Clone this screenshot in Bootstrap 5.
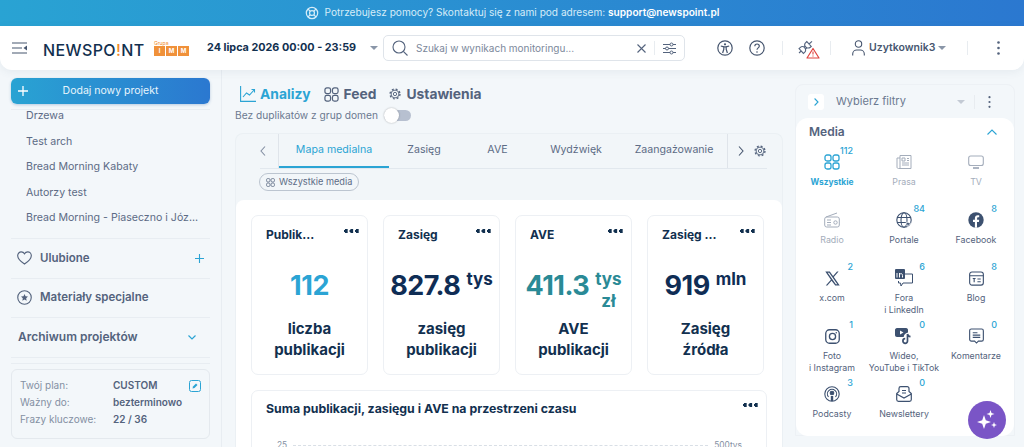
<!DOCTYPE html>
<html lang="pl">
<head>
  <meta charset="UTF-8">
  <meta name="viewport" content="width=device-width, initial-scale=1">
  <title>Newspoint</title>
  <link href="https://cdn.jsdelivr.net/npm/bootstrap@5.3.0/dist/css/bootstrap.min.css" rel="stylesheet">
  <style>
    html, body { height: 447px; overflow: hidden; }
    body { font-family: Inter, "Liberation Sans", sans-serif; background: #f3f7fa; color: #0f2d55; font-size: 11px; position: relative; }
    svg { display: block; flex-shrink: 0; }

    .help-bar { height: 26px; background: linear-gradient(90deg, #29a3d3, #2b78d0); color: #d5ecf8; font-size: 10.1px; gap: 6px; }
    .help-bar b { color: #fff; font-weight: 600; }

    .top-head { height: 44px; background: #fff; border-radius: 0 0 12px 12px; box-shadow: 0 2px 8px rgba(60,90,120,.08); padding-left: 12px; position: relative; z-index: 2; }
    .brand-name { font-size: 16px; font-weight: 500; letter-spacing: .4px; color: #12304f; margin-left: 16px; width: 111px; line-height: 1; padding-top: 3px; white-space: nowrap; }
    .brand-name span { color: #f08a2c; }
    .imm-wrap { width: 36px; color: #f08a2c; font-size: 5px; line-height: 6px; margin-right: 17px; }
    .imm-row { display: flex; gap: 1px; }
    .imm-sq { width: 11px; height: 10px; background: #f0913a; color: #fff; font-size: 6px; line-height: 10px; text-align: center; font-weight: 700; }
    .date-txt { font-size: 10.8px; font-weight: 700; color: #12304f; width: 163px; white-space: nowrap; }
    .caret-dn { width: 0; height: 0; border-left: 4px solid transparent; border-right: 4px solid transparent; border-top: 4px solid #8a96a8; }
    .search-box { width: 302px; height: 26px; border: 1px solid #dfe4ea; border-radius: 5px; margin-left: 5px; padding: 0 8px; color: #7c889b; }
    .search-box .ph { font-size: 10px; margin-left: 8px; flex-grow: 1; }
    .v-sep { width: 1px; height: 14px; background: #e8ecf0; }
    .user-name { font-size: 10.5px; font-weight: 600; color: #47566f; margin-left: 4px; width: 66px; }

    .page-cols { height: 377px; }
    .side-col { width: 222px; flex-shrink: 0; border-right: 1px solid #e8edf2; padding: 8px 11px 0; }
    .add-btn { height: 26px; width: 199px; background: linear-gradient(90deg, #29a3d3, #2b78d0); color: #e8f5fc; border: 0; border-radius: 6px; font-size: 10.5px; padding: 0 7px; box-shadow: 0 1px 3px rgba(40,100,160,.3); }
    .add-btn:hover { background: #2b78d0; color: #fff; }
    .add-btn span { flex-grow: 1; text-align: center; padding-right: 10px; }
    .side-rule { border-top: 1px solid #e8edf2; margin: 0; opacity: 1; }
    .proj-link { padding: 0 0 0 15px; height: 25.6px; line-height: 25.6px; color: #5c6b85; font-size: 10.6px; white-space: nowrap; }
    .side-head { height: 39.5px; padding: 0 6px; color: #54637d; font-size: 11.5px; font-weight: 600; border-bottom: 1px solid #e8edf2; }
    .side-head.arch { font-size: 12px; padding-left: 7px; }
    .plan-box { margin-top: 5px; height: 70px; border: 1px solid #e4e9ee; border-radius: 6px; padding: 7px 8px; position: relative; font-size: 10px; line-height: 17px; color: #8490a3; }
    .plan-box b { color: #54637d; font-weight: 600; }
    .plan-label { width: 93px; }

    .main-col { width: 573px; flex-shrink: 0; padding: 0 12px 0 13px; }
    .view-tabs { height: 36px; padding: 12px 0 0 5px; font-size: 13.8px; font-weight: 700; color: #54637d; }
    .view-tabs .on { color: #2ba4d4; }
    .dup-row { height: 19px; font-size: 10.2px; color: #6b7990; }
    .tgl { width: 27px; height: 11px; background: #b7c0d0; border-radius: 6px; margin-left: 6px; position: relative; }
    .tgl::before { content: ""; position: absolute; left: 0; top: -2px; width: 15px; height: 15px; border-radius: 50%; background: #fff; box-shadow: 0 0 2px rgba(0,0,0,.3); }
    .media-shell { margin-top: 8px; border: 1px solid #ebf0f4; border-bottom: 0; border-radius: 8px 8px 0 0; background: #f2f6f9; height: 400px; }
    .chart-tabs { height: 35px; margin: 0 15px 0 24px; border-bottom: 1px solid #e2e8ee; font-size: 10.6px; color: #5c6b85; }
    .tab-scroll { width: 450px; height: 34px; border-left: 1px solid #dfe4ea; border-right: 1px solid #dfe4ea; margin: 0 10px 0 12px; }
    .tab-item { text-align: center; height: 34px; line-height: 32px; white-space: nowrap; }
    .tab-item.on { color: #2ba4d4; border-bottom: 2px solid #2ba4d4; }
    .chip-wrap { height: 31px; padding: 4px 0 0 23px; }
    .media-chip { height: 18px; border: 1px solid #bcc5d0; border-radius: 9px; padding: 0 6px; font-size: 9.2px; color: #5c6b85; }
    .white-panel { background: #fff; border-radius: 8px; padding: 15px; height: 300px; }
    .stat-tile { width: 117px; height: 160px; border: 1px solid #edf0f4; border-radius: 7px; padding: 10px 8px 0 14px; text-align: center; }
    .stat-top { height: 13px; font-size: 12px; font-weight: 700; color: #12304f; text-align: left; white-space: nowrap; }
    .dots3 { width: 15px; height: 4px; margin-top: 3px; background: radial-gradient(circle 2px at 2px 2px, #12304f 98%, transparent) 0 0 / 5.5px 4px repeat-x; }
    .stat-val { height: 37px; margin-top: 33px; padding-right: 6px; font-size: 27px; font-weight: 700; line-height: 1; color: #0f2d55; letter-spacing: -.5px; }
    .stat-val .unit { font-size: 17px; margin-left: 6px; line-height: 22px; margin-top: -4px; letter-spacing: 0; }
    .stat-lbl { margin-top: 9px; padding-right: 6px; font-size: 15px; font-weight: 700; line-height: 21px; color: #12304f; }
    .sum-tile { margin-top: 15px; border: 1px solid #edf0f4; border-radius: 7px; padding: 9px 8px 0 14px; height: 120px; font-size: 12.3px; font-weight: 700; color: #12304f; }
    .axis-row { margin-top: 21px; font-size: 8.4px; font-weight: 400; color: #8490a3; padding: 0 16px 0 11px; }
    .axis-row i { flex-grow: 1; border-top: 1px dashed #d9dfe6; margin: 0 6px; }

    .filter-col { width: 220px; flex-shrink: 0; margin-top: 14px; border: 1px solid #edf1f5; border-radius: 8px 8px 0 0; height: 352px; position: relative; }
    .filter-top { height: 33px; padding: 0 23px 0 12px; color: #6b7990; font-size: 11px; }
    .filter-top .v-sep { margin: 0 13px 0 9px; }
    .chev-box { width: 16px; height: 16px; background: #fff; border-radius: 3px; margin-right: 12px; }
    .media-card { background: #fff; border-radius: 12px; height: 318px; padding-top: 6px; }
    .media-title { height: 15px; padding: 0 17px 0 13px; font-size: 12px; font-weight: 600; color: #54637d; }
    .media-grid { display: grid; grid-template-columns: repeat(3, 72px); grid-auto-rows: 58px; margin-top: 6px; }
    .m-cell { text-align: center; font-size: 8.8px; line-height: 12px; color: #54637d; }
    .m-num { height: 12px; text-align: right; padding-right: 15px; color: #2ba4d4; font-size: 9px; font-weight: 500; line-height: 12px; }
    .m-ico { height: 22px; margin-top: -6px; margin-bottom: 3px; display: flex; justify-content: center; align-items: center; }
    .m-cell.off { color: #a4adbb; }
    .m-cell.on { color: #2ba4d4; font-weight: 700; font-size: 8.4px; }
    .spark-btn { position: absolute; right: 8px; bottom: -4px; width: 38px; height: 38px; background: #7a55c6; border-radius: 50%; }
  </style>
</head>
<body>

  <svg width="0" height="0" style="position:absolute">
    <symbol id="ic-grid" viewBox="0 0 16 16"><g fill="none" stroke="currentColor" stroke-width="1.3"><rect x="1" y="1" width="6" height="6" rx="2"/><rect x="9" y="1" width="6" height="6" rx="2"/><rect x="1" y="9" width="6" height="6" rx="2"/><rect x="9" y="9" width="6" height="6" rx="2"/></g></symbol>
    <symbol id="ic-gear" viewBox="0 0 16 16"><g fill="none" stroke="currentColor"><circle cx="8" cy="8" r="5.2" stroke-width="1.2"/><circle cx="8" cy="8" r="6.6" stroke-width="1.8" stroke-dasharray="2.6 2.6"/><circle cx="8" cy="8" r="2.2" stroke-width="1.2"/></g></symbol>
  </svg>

  <!-- Help bar -->
  <div class="help-bar d-flex align-items-center justify-content-center">
    <svg width="14" height="14" viewBox="0 0 16 16" fill="none" stroke="#d5ecf8" stroke-width="1.4"><circle cx="8" cy="8" r="6.5"/><circle cx="8" cy="8" r="2.8"/><path d="M3.5 3.5l2.5 2.5M12.5 3.5L10 6M3.5 12.5L6 10M12.5 12.5L10 10"/></svg>
    <span>Potrzebujesz pomocy? Skontaktuj się z nami pod adresem: <b>support@newspoint.pl</b></span>
  </div>

  <!-- Header -->
  <header class="top-head d-flex align-items-center">
    <svg width="15" height="12" viewBox="0 0 15 12" stroke="#47566f" stroke-width="1.2" fill="#47566f"><path d="M0 1h15M0 6h10M0 11h15" fill="none"/><path d="M15 3.5v5L11.5 6z" stroke="none"/></svg>
    <div class="brand-name">NEWSPO<span>!</span>NT</div>
    <div class="imm-wrap">
      Grupa
      <div class="imm-row"><div class="imm-sq">I</div><div class="imm-sq">M</div><div class="imm-sq">M</div></div>
    </div>
    <div class="date-txt">24 lipca 2026 00:00 - 23:59</div>
    <div class="caret-dn"></div>
    <div class="search-box d-flex align-items-center">
      <svg width="16" height="16" viewBox="0 0 16 16" fill="none" stroke="#54637d" stroke-width="1.1"><circle cx="7" cy="7" r="6"/><path d="M11.3 11.3L15.5 15.5"/></svg>
      <span class="ph">Szukaj w wynikach monitoringu...</span>
      <svg width="9" height="9" viewBox="0 0 9 9" stroke="#54637d" stroke-width="1.1"><path d="M.5.5l8 8M8.5.5l-8 8"/></svg>
      <div class="v-sep mx-2"></div>
      <svg width="13" height="13" viewBox="0 0 13 13" fill="none" stroke="#54637d" stroke-width="1"><path d="M0 2.5h13M0 6.5h13M0 10.5h13"/><circle cx="8.5" cy="2.5" r="1.5" fill="#fff"/><circle cx="4" cy="6.5" r="1.5" fill="#fff"/><circle cx="8.5" cy="10.5" r="1.5" fill="#fff"/></svg>
    </div>
    <svg style="margin-left:32px" width="16" height="16" viewBox="0 0 16 16" fill="none" stroke="#47566f" stroke-width="1.2"><circle cx="8" cy="8" r="7.2"/><circle cx="8" cy="4.3" r="1.1" fill="#47566f" stroke="none"/><path d="M3.8 6l3 .8v2.5L5.6 13M12.2 6l-3 .8v2.5l1.2 3.700M6.800 6.800h2.400"/></svg>
    <svg style="margin-left:16px" width="16" height="16" viewBox="0 0 16 16" fill="none" stroke="#47566f" stroke-width="1.2"><circle cx="8" cy="8" r="7.2"/><path d="M5.8 6.200c0-3 4.500-2.900 4.500-.1 0 1.800-2.300 1.800-2.300 3.700"/><circle cx="8" cy="12" r=".8" fill="#47566f" stroke="none"/></svg>
    <div class="v-sep" style="margin-left:17px"></div>
    <svg style="margin-left:15px" width="22" height="22" viewBox="0 0 22 22" fill="none" stroke="#54637d" stroke-width="1.100">
      <g transform="rotate(-42 1 16)"><path d="M1 16h3M4 12.700h1.500a3.300 3.300 0 0 1 0 6.600H4zM8.800 14.600h2M8.800 17.400h2M14.500 12.700h-1.200a3.300 3.300 0 0 0 0 6.600h1.200zM14.500 16h4"/></g>
      <path d="M15 11.500l6 9.500H9z" fill="#fff" stroke="#e0443f" stroke-width="1.200" stroke-linejoin="round"/><path d="M15 14.500v3M15 18.500v1" stroke="#e0443f"/>
    </svg>
    <div class="v-sep" style="margin-left:10px"></div>
    <svg style="margin-left:21px" width="13" height="16" viewBox="0 0 13 16" fill="none" stroke="#47566f" stroke-width="1.100"><circle cx="6.500" cy="4" r="3.200"/><path d="M.7 15.500v-1.500c0-2.500 2-4 4-4h3.600c2 0 4 1.500 4 4v1.500"/></svg>
    <span class="user-name">Uzytkownik3</span>
    <div class="caret-dn" style="margin-left:3px"></div>
    <div class="v-sep" style="margin-left:21px"></div>
    <svg style="margin-left:29px" width="3" height="14" viewBox="0 0 3 14" fill="#54637d"><circle cx="1.500" cy="1.500" r="1.300"/><circle cx="1.500" cy="7" r="1.300"/><circle cx="1.500" cy="12.500" r="1.300"/></svg>
  </header>

  <div class="page-cols d-flex">

    <!-- Left sidebar -->
    <aside class="side-col">
      <button class="btn add-btn d-flex align-items-center" type="button">
        <svg width="10" height="10" viewBox="0 0 10 10" stroke="#fff" stroke-width="1.300"><path d="M5 0v10M0 5h10"/></svg>
        <span>Dodaj nowy projekt</span>
      </button>
      <hr class="side-rule" style="margin-top:5px">
      <nav class="nav flex-column pb-1" style="height:128px">
        <a class="nav-link proj-link" style="margin-top:-7px" href="#">Drzewa</a>
        <a class="nav-link proj-link" href="#">Test arch</a>
        <a class="nav-link proj-link" href="#">Bread Morning Kabaty</a>
        <a class="nav-link proj-link" href="#">Autorzy test</a>
        <a class="nav-link proj-link" href="#">Bread Morning - Piaseczno i Józ...</a>
      </nav>
      <hr class="side-rule">
      <div class="side-head d-flex align-items-center gap-2">
        <svg width="15" height="14" viewBox="0 0 16 15" fill="none" stroke="#54637d" stroke-width="1.200"><path d="M8 14C3 10.500.7 8 .7 5 .7 2.700 2.500 1 4.500 1 6 1 7.300 1.800 8 3c.7-1.200 2-2 3.500-2 2 0 3.800 1.700 3.800 4 0 3-2.300 5.500-7.300 9z"/></svg>
        <span class="flex-grow-1">Ulubione</span>
        <svg width="9" height="9" viewBox="0 0 9 9" stroke="#2ba4d4" stroke-width="1.100"><path d="M4.500 0v9M0 4.500h9"/></svg>
      </div>
      <div class="side-head d-flex align-items-center gap-2">
        <svg width="15" height="15" viewBox="0 0 16 16" fill="none" stroke="#54637d" stroke-width="1.200"><circle cx="8" cy="8" r="7.200"/><path d="M8 4.300l1.100 2.400 2.600.3-1.900 1.800.5 2.600L8 10.100l-2.300 1.300.5-2.600L4.300 7l2.600-.3z" fill="#54637d" stroke="none"/></svg>
        <span>Materiały specjalne</span>
      </div>
      <div class="side-head arch d-flex align-items-center">
        <span class="flex-grow-1">Archiwum projektów</span>
        <svg class="me-2" width="8" height="5" viewBox="0 0 8 5" fill="none" stroke="#2ba4d4" stroke-width="1.200"><path d="M.5.500L4 4 7.500.500"/></svg>
      </div>
      <hr class="side-rule" style="margin-top:5px">
      <div class="plan-box">
        <div class="d-flex"><span class="plan-label">Twój plan:</span><b>CUSTOM</b></div>
        <div class="d-flex"><span class="plan-label">Ważny do:</span><b>bezterminowo</b></div>
        <div class="d-flex"><span class="plan-label">Frazy kluczowe:</span><b>22 / 36</b></div>
        <svg class="position-absolute" style="top:10px;right:8px" width="12" height="12" viewBox="0 0 12 12" fill="none" stroke="#2ba4d4"><rect x=".5" y=".5" width="11" height="11" rx="2"/><path d="M3.500 8.500l.5-2 3-3 1.500 1.500-3 3z" fill="#2ba4d4" stroke="none"/></svg>
      </div>
    </aside>

    <!-- Main column -->
    <main class="main-col">
      <div class="view-tabs d-flex align-items-center">
        <svg width="16" height="16" viewBox="0 0 16 16" fill="none" stroke="#2ba4d4" stroke-width="1.100"><path d="M.6 0v15.400H16M3 11l3.500-4 3 2 5-5.500M11.500 3.500h3v3"/></svg>
        <span class="on" style="margin:0 13px 0 4px">Analizy</span>
        <svg width="15" height="15" style="color:#54637d"><use href="#ic-grid"/></svg>
        <span style="margin:0 13px 0 5px">Feed</span>
        <svg width="12" height="12" style="color:#54637d"><use href="#ic-gear"/></svg>
        <span style="margin-left:5px">Ustawienia</span>
      </div>
      <div class="dup-row d-flex align-items-center">Bez duplikatów z grup domen <div class="tgl"></div></div>
      <div class="media-shell">
        <div class="chart-tabs d-flex align-items-center">
          <svg width="6" height="10" viewBox="0 0 6 10" fill="none" stroke="#8490a3" stroke-width="1.100"><path d="M5 .5L1 5l4 4.500"/></svg>
          <div class="tab-scroll d-flex">
            <div class="tab-item on" style="width:110px">Mapa medialna</div>
            <div class="tab-item" style="width:70px">Zasięg</div>
            <div class="tab-item" style="width:77px">AVE</div>
            <div class="tab-item" style="width:80px">Wydźwięk</div>
            <div class="tab-item" style="width:111px;padding-left:5px">Zaangażowanie</div>
          </div>
          <svg width="6" height="10" viewBox="0 0 6 10" fill="none" stroke="#47566f" stroke-width="1.100"><path d="M1 .5L5 5 1 9.500"/></svg>
          <svg width="12" height="12" style="color:#54637d;margin-left:10px"><use href="#ic-gear"/></svg>
        </div>
        <div class="chip-wrap">
          <span class="media-chip d-inline-flex align-items-center gap-1"><svg width="9" height="9" style="color:#54637d"><use href="#ic-grid"/></svg>Wszystkie media</span>
        </div>
        <div class="white-panel">
          <div class="d-flex" style="gap:15px">
            <div class="stat-tile">
              <div class="stat-top d-flex justify-content-between"><span>Publik...</span><div class="dots3"></div></div>
              <div class="stat-val d-flex justify-content-center" style="color:#2ba4d4">112</div>
              <div class="stat-lbl">liczba<br>publikacji</div>
            </div>
            <div class="stat-tile">
              <div class="stat-top d-flex justify-content-between"><span>Zasięg</span><div class="dots3"></div></div>
              <div class="stat-val d-flex justify-content-center">827.8<span class="unit">tys</span></div>
              <div class="stat-lbl">zasięg<br>publikacji</div>
            </div>
            <div class="stat-tile">
              <div class="stat-top d-flex justify-content-between"><span>AVE</span><div class="dots3"></div></div>
              <div class="stat-val d-flex justify-content-center" style="color:#2a8a96">411.3<span class="unit">tys<br>zł</span></div>
              <div class="stat-lbl">AVE<br>publikacji</div>
            </div>
            <div class="stat-tile">
              <div class="stat-top d-flex justify-content-between"><span>Zasięg ...</span><div class="dots3"></div></div>
              <div class="stat-val d-flex justify-content-center">919<span class="unit">mln</span></div>
              <div class="stat-lbl">Zasięg<br>źródła</div>
            </div>
          </div>
          <div class="sum-tile">
            <div class="d-flex justify-content-between"><span>Suma publikacji, zasięgu i AVE na przestrzeni czasu</span><div class="dots3"></div></div>
            <div class="axis-row d-flex align-items-center"><span>25</span><i></i><span>500tys</span></div>
          </div>
        </div>
      </div>
    </main>

    <!-- Filters -->
    <section class="filter-col">
      <div class="filter-top d-flex align-items-center">
        <div class="chev-box d-flex align-items-center justify-content-center"><svg width="5" height="8" viewBox="0 0 5 8" fill="none" stroke="#2ba4d4" stroke-width="1.100"><path d="M.6.500L4 4 .6 7.500"/></svg></div>
        <span class="flex-grow-1">Wybierz filtry</span>
        <div class="caret-dn" style="border-top-color:#c3cad4"></div>
        <div class="v-sep"></div>
        <svg width="3" height="12" viewBox="0 0 3 12" fill="#54637d"><circle cx="1.500" cy="1.200" r="1.100"/><circle cx="1.500" cy="6" r="1.100"/><circle cx="1.500" cy="10.800" r="1.100"/></svg>
      </div>
      <div class="media-card">
        <div class="media-title d-flex justify-content-between align-items-center"><span>Media</span><svg width="10" height="6" viewBox="0 0 10 6" fill="none" stroke="#2ba4d4" stroke-width="1.100"><path d="M.5 5.500L5 1l4.500 4.500"/></svg></div>
        <div class="media-grid">
          <div class="m-cell on">
            <div class="m-num">112</div>
            <div class="m-ico"><svg width="16" height="16"><use href="#ic-grid"/></svg></div>
            Wszystkie
          </div>
          <div class="m-cell off">
            <div class="m-num"></div>
            <div class="m-ico"><svg width="16" height="16" viewBox="0 0 16 16" fill="none" stroke="#a4adbb"><path d="M4 14.500V1.500h11v13zM4 4H1v9c0 1 .7 1.500 1.500 1.500H4M6 4h3v3H6zM11 4.500h2M11 6.500h2M6 9h7M6 11h7"/></svg></div>
            Prasa
          </div>
          <div class="m-cell off">
            <div class="m-num"></div>
            <div class="m-ico"><svg width="16" height="16" viewBox="0 0 16 16" fill="none" stroke="#a4adbb" stroke-width="1.100"><rect x=".7" y="2" width="14.600" height="9.500" rx="2"/><path d="M5 14h6" stroke-width="1.800"/></svg></div>
            TV
          </div>
          <div class="m-cell off">
            <div class="m-num"></div>
            <div class="m-ico"><svg width="16" height="16" viewBox="0 0 16 16" fill="none" stroke="#a4adbb"><rect x=".7" y="5" width="14.600" height="10" rx="2"/><path d="M2 5l11-4M3 8h4M3 10.500h4M3 13h4"/><circle cx="11.500" cy="10.500" r="1.700"/></svg></div>
            Radio
          </div>
          <div class="m-cell">
            <div class="m-num">84</div>
            <div class="m-ico"><svg width="16" height="16" viewBox="0 0 16 16" fill="none" stroke="#3d5170" stroke-width="1.100"><circle cx="8" cy="8" r="7.200"/><ellipse cx="8" cy="8" rx="3" ry="7.200"/><path d="M1 5.500h14M1 10.500h9"/><path d="M10 10l5.500 1.500-2.500 1-1 2.500z" fill="#3d5170" stroke="#fff" stroke-width=".6"/></svg></div>
            Portale
          </div>
          <div class="m-cell">
            <div class="m-num">8</div>
            <div class="m-ico"><svg width="16" height="16" viewBox="0 0 16 16"><circle cx="8" cy="8" r="7.700" fill="#3d5170"/><path d="M6.900 15.700V10H5V7.800h1.900V6.100c0-1.900 1.100-2.900 2.800-2.900.8 0 1.500.1 1.500.1v1.900h-.9c-.9 0-1.200.6-1.200 1.200v1.400h2.100l-.3 2.200H9v5.700z" fill="#fff"/></svg></div>
            Facebook
          </div>
          <div class="m-cell">
            <div class="m-num">2</div>
            <div class="m-ico"><svg width="15" height="15" viewBox="0 0 16 16"><path d="M.3.500h4.800l3.500 4.800L12.800.500h1.700L9.400 6.400l6.300 9.100h-4.800L7 10.300 2.500 15.500H.8l5.500-6.300zM2.900 1.800l8.700 12.400h1.500L4.400 1.800z" fill="#3d5170"/></svg></div>
            x.com
          </div>
          <div class="m-cell">
            <div class="m-num">6</div>
            <div class="m-ico"><svg width="18" height="18" viewBox="0 0 18 18"><rect x="0" y="0" width="10" height="10" rx="1" fill="#3d5170"/><path d="M2 4v4.500M4.500 8.500V4M4.500 5.500c1.500-1.500 3-1 3 1v2" stroke="#fff" fill="none"/><path d="M10 5h7.500v9H8l-2 3-.5-3H3.500v-2" fill="none" stroke="#3d5170"/></svg></div>
            Fora<br>i LinkedIn
          </div>
          <div class="m-cell">
            <div class="m-num">8</div>
            <div class="m-ico"><svg width="15" height="15" viewBox="0 0 16 16" fill="none" stroke="#3d5170" stroke-width="1.200"><rect x=".7" y="1" width="14.600" height="14" rx="2.500"/><path d="M.7 5h14.600M4 8h3M5.500 8v4M9 8.500h3.500M9 11.500h3.500"/></svg></div>
            Blog
          </div>
          <div class="m-cell">
            <div class="m-num">1</div>
            <div class="m-ico"><svg width="15" height="15" viewBox="0 0 16 16" fill="none" stroke="#3d5170" stroke-width="1.400"><rect x=".8" y=".8" width="14.400" height="14.400" rx="4"/><circle cx="8" cy="8" r="3.300"/><circle cx="12" cy="4" r=".8" fill="#3d5170" stroke="none"/></svg></div>
            Foto<br>i Instagram
          </div>
          <div class="m-cell">
            <div class="m-num">0</div>
            <div class="m-ico"><svg width="18" height="18" viewBox="0 0 18 18"><path d="M2 1h9c1.500 0 2 1 2 2v2.500C10 6 9 8 8.700 10H2c-1.200 0-2-1-2-2V3c0-1 .8-2 2-2z" fill="#3d5170"/><path d="M5 3.500v4l3.500-2z" fill="#fff"/><path d="M12.500 7v7a2.300 2.300 0 1 1-2.300-2.300M12.500 7c.3 1.500 1.300 2.500 3 2.700" fill="none" stroke="#3d5170" stroke-width="1.700"/></svg></div>
            Wideo,<br>YouTube i TikTok
          </div>
          <div class="m-cell">
            <div class="m-num">0</div>
            <div class="m-ico"><svg width="15" height="16" viewBox="0 0 16 17" fill="none" stroke="#3d5170" stroke-width="1.200"><path d="M2.500 1h11c1 0 1.800.8 1.800 1.800v9.400c0 1-.8 1.800-1.800 1.800H10l-2 2-2-2H2.500c-1 0-1.800-.8-1.800-1.800V2.800C.7 1.800 1.500 1 2.500 1zM4 5h5M4 7.500h8M4 10h8"/></svg></div>
            Komentarze
          </div>
          <div class="m-cell">
            <div class="m-num">3</div>
            <div class="m-ico"><svg width="16" height="17" viewBox="0 0 16 17" fill="none" stroke="#3d5170" stroke-width="1.100"><circle cx="8" cy="8" r="7.200"/><path d="M4.500 11a4.600 4.600 0 1 1 7 0"/><circle cx="8" cy="7" r="1.800" fill="#3d5170"/><path d="M8 10v5" stroke-width="2.400"/></svg></div>
            Podcasty
          </div>
          <div class="m-cell">
            <div class="m-num">0</div>
            <div class="m-ico"><svg width="16" height="16" viewBox="0 0 16 16" fill="none" stroke="#3d5170" stroke-width="1.200"><path d="M.7 7.500v6c0 1 .8 1.800 1.800 1.800h11c1 0 1.800-.8 1.800-1.800v-6L13 5.500V2.500c0-1-.8-1.800-1.800-1.800H4.800C3.800.7 3 1.500 3 2.500v3zM.7 8L8 12l7.300-4M6 4.500h4M6 7h4"/></svg></div>
            Newslettery
          </div>
        </div>
      </div>
      <div class="spark-btn d-flex align-items-center justify-content-center">
        <svg width="24" height="24" viewBox="0 0 24 24" fill="#fff"><path d="M9 7l1.800 5.200L16 14l-5.200 1.800L9 21l-1.800-5.200L2 14l5.200-1.800z"/><path d="M15.500 2l1 3 3 1-3 1-1 3-1-3-3-1 3-1z"/><path d="M19 14l.8 2.200 2.200.8-2.200.8L19 20l-.8-2.200L16 17l2.200-.8z"/></svg>
      </div>
    </section>
  </div>

  <script src="https://cdn.jsdelivr.net/npm/bootstrap@5.3.0/dist/js/bootstrap.bundle.min.js"></script>
</body>
</html>
